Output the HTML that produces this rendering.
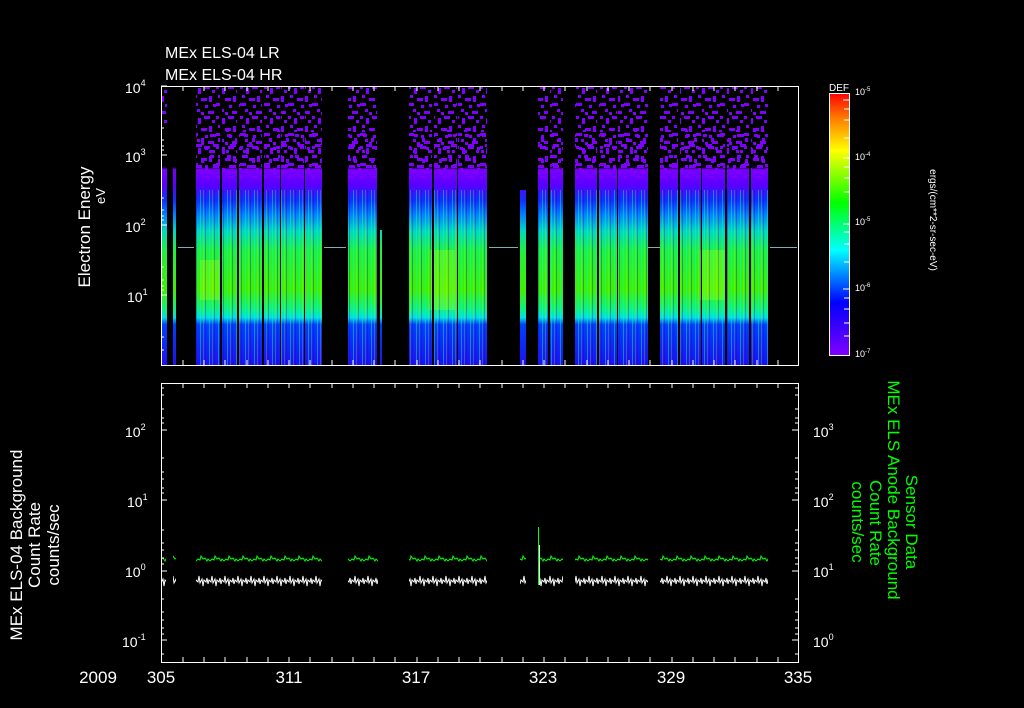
<!DOCTYPE html>
<html><head><meta charset="utf-8"><style>
html,body{margin:0;padding:0;background:#000;}
svg{display:block;font-family:"Liberation Sans",sans-serif;}
</style></head><body>
<svg width="1024" height="708" viewBox="0 0 1024 708" xmlns="http://www.w3.org/2000/svg">
<defs>
<linearGradient id="spec" x1="0" y1="86" x2="0" y2="365" gradientUnits="userSpaceOnUse">
<stop offset="0" stop-color="#000"/>
<stop offset="0.29" stop-color="#000"/>
<stop offset="0.30" stop-color="#7a00ff"/>
<stop offset="0.355" stop-color="#5a00ff"/>
<stop offset="0.41" stop-color="#1030ff"/>
<stop offset="0.46" stop-color="#0080ff"/>
<stop offset="0.52" stop-color="#00d8c0"/>
<stop offset="0.59" stop-color="#20f040"/>
<stop offset="0.73" stop-color="#40f000"/>
<stop offset="0.80" stop-color="#10f080"/>
<stop offset="0.83" stop-color="#00e0e0"/>
<stop offset="0.855" stop-color="#0040ff"/>
<stop offset="1" stop-color="#2010f0"/>
</linearGradient>
<pattern id="speck" x="0" y="86" width="24" height="30" patternUnits="userSpaceOnUse">
<rect x="0" y="0" width="3" height="3" fill="#7f00ff"/><rect x="6" y="2" width="3" height="6" fill="#7f00ff"/>
<rect x="12" y="0" width="6" height="3" fill="#7f00ff"/><rect x="20" y="4" width="3" height="3" fill="#7f00ff"/>
<rect x="2" y="9" width="3" height="3" fill="#7f00ff"/><rect x="9" y="12" width="6" height="3" fill="#7f00ff"/>
<rect x="17" y="10" width="3" height="6" fill="#7f00ff"/><rect x="0" y="17" width="6" height="3" fill="#7f00ff"/>
<rect x="13" y="19" width="3" height="3" fill="#7f00ff"/><rect x="21" y="18" width="3" height="3" fill="#7f00ff"/>
<rect x="5" y="23" width="3" height="3" fill="#7f00ff"/><rect x="16" y="25" width="6" height="3" fill="#7f00ff"/>
<rect x="9" y="26" width="3" height="3" fill="#7f00ff"/>
</pattern>
<pattern id="speck2" x="5" y="90" width="17" height="21" patternUnits="userSpaceOnUse">
<rect x="1" y="2" width="4" height="3" fill="#7f00ff"/><rect x="9" y="6" width="3" height="4" fill="#7f00ff"/>
<rect x="4" y="12" width="6" height="3" fill="#7f00ff"/><rect x="13" y="15" width="3" height="3" fill="#7f00ff"/>
<rect x="0" y="18" width="3" height="3" fill="#7f00ff"/>
</pattern>
<pattern id="stripe" x="0" y="0" width="9" height="10" patternUnits="userSpaceOnUse">
<rect x="2" y="0" width="1" height="10" fill="#00ffd0" opacity="0.45"/><rect x="5" y="0" width="1" height="10" fill="#c0ff00" opacity="0.25"/><rect x="7" y="0" width="1" height="10" fill="#0010c0" opacity="0.35"/>
</pattern>
<linearGradient id="cbar" x1="0" y1="355" x2="0" y2="93" gradientUnits="userSpaceOnUse">
<stop offset="0" stop-color="#8000ff"/><stop offset="0.2" stop-color="#0000ff"/>
<stop offset="0.4" stop-color="#00ffff"/><stop offset="0.58" stop-color="#00ff00"/>
<stop offset="0.78" stop-color="#ffff00"/><stop offset="0.9" stop-color="#ff8000"/>
<stop offset="1" stop-color="#ff0000"/>
</linearGradient>
<pattern id="zigg" x="0" y="553" width="14" height="12" patternUnits="userSpaceOnUse">
<polyline points="0,8 2,6 4,7 5,3 7,6 9,5 11,8 12,6 14,8" fill="none" stroke="#00ff00" stroke-width="1"/>
</pattern>
<pattern id="zigw" x="0" y="574" width="13" height="18" patternUnits="userSpaceOnUse">
<polyline points="0,10 1,6 3,8 4,2 5,9 7,5 8,12 9,6 11,8 12,4 13,10" fill="none" stroke="#fff" stroke-width="1"/>
</pattern>
</defs>

<text x="165" y="58" fill="#fff" font-size="16">MEx ELS-04 LR</text>
<text x="165" y="80" fill="#fff" font-size="16">MEx ELS-04 HR</text>

<g>
<rect x="162" y="86" width="5" height="279" fill="url(#spec)"/>
<rect x="173" y="86" width="3" height="279" fill="url(#spec)"/>
<rect x="196" y="86" width="126" height="279" fill="url(#spec)"/>
<rect x="348" y="86" width="29" height="279" fill="url(#spec)"/>
<rect x="380" y="230" width="2" height="135" fill="url(#spec)"/>
<rect x="409" y="86" width="78" height="279" fill="url(#spec)"/>
<rect x="520" y="190" width="6" height="175" fill="url(#spec)"/>
<rect x="538" y="86" width="25" height="279" fill="url(#spec)"/>
<rect x="575" y="86" width="73" height="279" fill="url(#spec)"/>
<rect x="660" y="86" width="108" height="279" fill="url(#spec)"/>
</g>
<g fill="url(#speck)">
<rect x="196" y="86" width="126" height="92"/>
<rect x="348" y="86" width="29" height="92"/>
<rect x="409" y="86" width="78" height="92"/>
<rect x="538" y="86" width="25" height="92"/>
<rect x="575" y="86" width="73" height="92"/>
<rect x="660" y="86" width="108" height="92"/>
<rect x="162" y="86" width="5" height="40"/>
</g>
<g fill="url(#speck2)">
<rect x="196" y="130" width="126" height="42"/>
<rect x="348" y="130" width="29" height="42"/>
<rect x="409" y="130" width="78" height="42"/>
<rect x="538" y="130" width="25" height="42"/>
<rect x="575" y="130" width="73" height="42"/>
<rect x="660" y="130" width="108" height="42"/>
</g>
<g fill="url(#stripe)">
<rect x="196" y="190" width="126" height="175"/>
<rect x="348" y="190" width="29" height="175"/>
<rect x="409" y="190" width="78" height="175"/>
<rect x="538" y="190" width="25" height="175"/>
<rect x="575" y="190" width="73" height="175"/>
<rect x="660" y="190" width="108" height="175"/>
</g>
<g fill="#d0ff00" opacity="0.25">
<rect x="430" y="250" width="25" height="60"/><rect x="200" y="260" width="20" height="40"/><rect x="700" y="250" width="25" height="50"/>
</g>
<g fill="#000">
<rect x="220" y="86" width="2" height="279"/><rect x="237" y="86" width="2" height="279"/>
<rect x="262" y="86" width="2" height="279"/><rect x="280" y="86" width="1" height="279"/>
<rect x="304" y="86" width="1" height="279"/>
<rect x="432" y="86" width="2" height="279"/><rect x="457" y="86" width="1" height="279"/>
<rect x="548" y="86" width="2" height="279"/>
<rect x="597" y="86" width="2" height="279"/><rect x="617" y="86" width="1" height="279"/>
<rect x="678" y="86" width="2" height="279"/><rect x="701" y="86" width="1" height="279"/>
<rect x="725" y="86" width="2" height="279"/><rect x="749" y="86" width="2" height="279"/>
</g>
<g stroke="#7fb0b0" stroke-width="1">
<line x1="178" y1="247.5" x2="194" y2="247.5"/><line x1="324" y1="247.5" x2="346" y2="247.5"/>
<line x1="489" y1="247.5" x2="518" y2="247.5"/><line x1="648" y1="247.5" x2="660" y2="247.5"/>
<line x1="770" y1="247.5" x2="797" y2="247.5"/>
</g>

<rect x="161.5" y="86.5" width="637" height="279" fill="none" stroke="#fff"/>
<g stroke="#fff">
<path d="M161 86h6M161 155h6M161 225h6M161 295h6 M161 128h3M161 140h3M161 146h3M161 150h3M161 198h3M161 210h3M161 216h3M161 220h3M161 267h3M161 280h3M161 286h3M161 290h3M161 337h3M161 350h3"/>
</g>
<g stroke="#fff">
<path d="M183 86v5M204 86v5M225 86v5M247 86v5M268 86v5M289 86v5M310 86v5M332 86v5M353 86v5M374 86v5M395 86v5M417 86v5M438 86v5M459 86v5M480 86v5M502 86v5M523 86v5M544 86v5M565 86v5M587 86v5M608 86v5M629 86v5M650 86v5M672 86v5M693 86v5M714 86v5M735 86v5M757 86v5M778 86v5"/>
<path d="M183 365v-5M204 365v-5M225 365v-5M247 365v-5M268 365v-5M289 365v-5M310 365v-5M332 365v-5M353 365v-5M374 365v-5M395 365v-5M417 365v-5M438 365v-5M459 365v-5M480 365v-5M502 365v-5M523 365v-5M544 365v-5M565 365v-5M587 365v-5M608 365v-5M629 365v-5M650 365v-5M672 365v-5M693 365v-5M714 365v-5M735 365v-5M757 365v-5M778 365v-5"/>
</g>
<g fill="#fff" font-size="14">
<text x="125" y="93">10<tspan font-size="9" dy="-7">4</tspan></text>
<text x="125" y="162">10<tspan font-size="9" dy="-7">3</tspan></text>
<text x="125" y="232">10<tspan font-size="9" dy="-7">2</tspan></text>
<text x="127" y="302">10<tspan font-size="9" dy="-7">1</tspan></text>
</g>
<text transform="translate(90,227) rotate(-90)" fill="#fff" font-size="17" text-anchor="middle">Electron Energy</text>
<text transform="translate(105,196) rotate(-90)" fill="#fff" font-size="13" text-anchor="middle">eV</text>

<text x="829" y="91" fill="#fff" font-size="10">DEF</text>
<rect x="829.5" y="93.5" width="20" height="262" fill="url(#cbar)" stroke="#fff"/>
<g stroke="#fff"><path d="M843 100h6M844 109h5M844 120h5M844 138h5M843 158h6M844 167h5M844 178h5M844 192h5M843 224h6M844 232h5M844 244h5M844 262h5M843 289h6M844 298h5M844 309h5M844 323h5M844 336h5"/></g>
<g fill="#fff" font-size="9">
<text x="855" y="95">10<tspan font-size="6" dy="-4">-5</tspan></text>
<text x="855" y="160">10<tspan font-size="6" dy="-4">-4</tspan></text>
<text x="855" y="225">10<tspan font-size="6" dy="-4">-5</tspan></text>
<text x="855" y="291">10<tspan font-size="6" dy="-4">-6</tspan></text>
<text x="855" y="357">10<tspan font-size="6" dy="-4">-7</tspan></text>
</g>
<text transform="translate(930,220) rotate(90)" fill="#fff" font-size="10" text-anchor="middle">ergs/(cm**2-sr-sec-eV)</text>

<g>
<rect x="162" y="553" width="4" height="12" fill="url(#zigg)"/><rect x="173" y="553" width="3" height="12" fill="url(#zigg)"/>
<rect x="196" y="553" width="126" height="12" fill="url(#zigg)"/>
<rect x="348" y="553" width="30" height="12" fill="url(#zigg)"/>
<rect x="409" y="553" width="78" height="12" fill="url(#zigg)"/>
<rect x="520" y="553" width="6" height="12" fill="url(#zigg)"/>
<rect x="538" y="553" width="25" height="12" fill="url(#zigg)"/>
<rect x="575" y="553" width="73" height="12" fill="url(#zigg)"/>
<rect x="660" y="553" width="108" height="12" fill="url(#zigg)"/>
<rect x="162" y="574" width="4" height="18" fill="url(#zigw)"/><rect x="173" y="574" width="3" height="18" fill="url(#zigw)"/>
<rect x="196" y="574" width="126" height="18" fill="url(#zigw)"/>
<rect x="348" y="574" width="30" height="18" fill="url(#zigw)"/>
<rect x="409" y="574" width="78" height="18" fill="url(#zigw)"/>
<rect x="520" y="574" width="6" height="18" fill="url(#zigw)"/>
<rect x="538" y="574" width="25" height="18" fill="url(#zigw)"/>
<rect x="575" y="574" width="73" height="18" fill="url(#zigw)"/>
<rect x="660" y="574" width="108" height="18" fill="url(#zigw)"/>
<line x1="538.5" y1="527" x2="538.5" y2="585" stroke="#0f0"/>
<line x1="539.5" y1="545" x2="539.5" y2="585" stroke="#fff"/>
</g>
<rect x="161.5" y="383.5" width="637" height="279" fill="none" stroke="#fff"/>
<g stroke="#fff">
<path d="M161 430h6M161 500h6M161 571h6M161 640h6 M161 388h3M161 395h3M161 409h3M161 418h3M161 423h3M161 458h3M161 472h3M161 479h3M161 488h3M161 493h3M161 530h3M161 543h3M161 550h3M161 558h3M161 564h3M161 599h3M161 612h3M161 620h3M161 628h3M161 634h3M161 654h3"/>
<path d="M798 430h-6M798 500h-6M798 571h-6M798 640h-6 M798 388h-3M798 395h-3M798 409h-3M798 418h-3M798 423h-3M798 458h-3M798 472h-3M798 479h-3M798 488h-3M798 493h-3M798 530h-3M798 543h-3M798 550h-3M798 558h-3M798 564h-3M798 599h-3M798 612h-3M798 620h-3M798 628h-3M798 634h-3M798 654h-3"/>
<path d="M183 383v5M204 383v5M225 383v5M247 383v5M268 383v5M289 383v5M310 383v5M332 383v5M353 383v5M374 383v5M395 383v5M417 383v5M438 383v5M459 383v5M480 383v5M502 383v5M523 383v5M544 383v5M565 383v5M587 383v5M608 383v5M629 383v5M650 383v5M672 383v5M693 383v5M714 383v5M735 383v5M757 383v5M778 383v5"/>
<path d="M183 662v-5M204 662v-5M225 662v-5M247 662v-5M268 662v-5M289 662v-5M310 662v-5M332 662v-5M353 662v-5M374 662v-5M395 662v-5M417 662v-5M438 662v-5M459 662v-5M480 662v-5M502 662v-5M523 662v-5M544 662v-5M565 662v-5M587 662v-5M608 662v-5M629 662v-5M650 662v-5M672 662v-5M693 662v-5M714 662v-5M735 662v-5M757 662v-5M778 662v-5"/>
</g>
<g fill="#fff" font-size="14">
<text x="125" y="437">10<tspan font-size="9" dy="-7">2</tspan></text>
<text x="127" y="507">10<tspan font-size="9" dy="-7">1</tspan></text>
<text x="125" y="577">10<tspan font-size="9" dy="-7">0</tspan></text>
<text x="122" y="647">10<tspan font-size="9" dy="-7">-1</tspan></text>
<text x="813" y="437">10<tspan font-size="9" dy="-7">3</tspan></text>
<text x="813" y="507">10<tspan font-size="9" dy="-7">2</tspan></text>
<text x="813" y="577">10<tspan font-size="9" dy="-7">1</tspan></text>
<text x="813" y="647">10<tspan font-size="9" dy="-7">0</tspan></text>
</g>
<g fill="#fff" font-size="17" text-anchor="middle">
<text transform="translate(22,545) rotate(-90)">MEx ELS-04 Background</text>
<text transform="translate(40,545) rotate(-90)">Count Rate</text>
<text transform="translate(59,545) rotate(-90)">counts/sec</text>
</g>
<g fill="#00ff00" font-size="17" text-anchor="middle">
<text transform="translate(906,522) rotate(90)">Sensor Data</text>
<text transform="translate(888,490) rotate(90)">MEx ELS Anode Background</text>
<text transform="translate(870,523) rotate(90)">Count Rate</text>
<text transform="translate(852,522) rotate(90)">counts/sec</text>
</g>
<g fill="#fff" font-size="17" text-anchor="middle">
<text x="98" y="683">2009</text>
<text x="161" y="683">305</text>
<text x="289" y="683">311</text>
<text x="416" y="683">317</text>
<text x="543" y="683">323</text>
<text x="671" y="683">329</text>
<text x="798" y="683">335</text>
</g>
</svg>
</body></html>
